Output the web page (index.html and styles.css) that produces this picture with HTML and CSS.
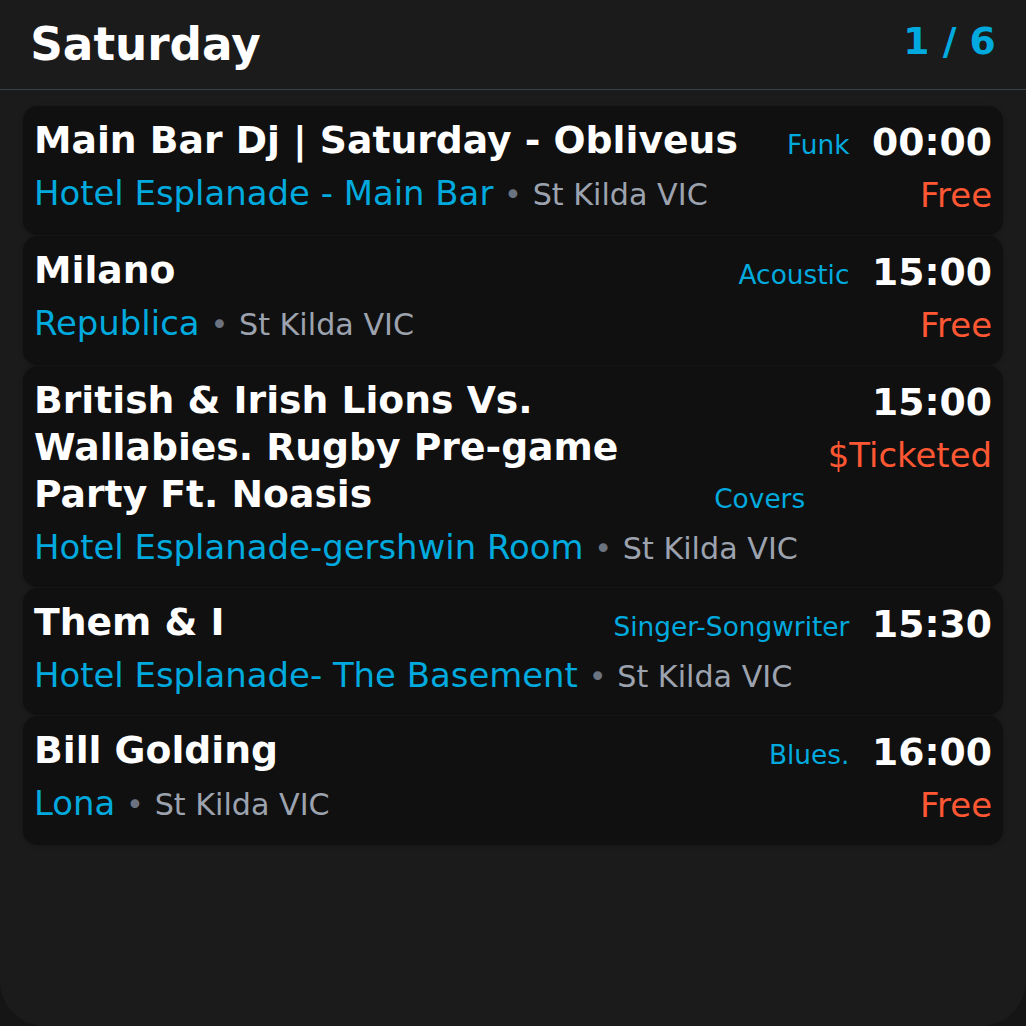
FILE: index.html
```html
<!DOCTYPE html>
<html>
<head>
<meta charset="utf-8">
<link rel="stylesheet" href="styles.css">
</head>
<body>
<div class="widget">
  <header class="head">
    <div class="day">Saturday</div>
    <div class="pager">1 / 6</div>
  </header>
  <div class="list">
    <div class="card">
      <div class="main">
        <div class="top">
          <div class="title">Main Bar Dj | Saturday - Obliveus</div>
          <div class="genre">Funk</div>
        </div>
        <div class="venue"><span class="vname">Hotel Esplanade - Main Bar</span> <span class="dot">•</span> <span class="loc">St Kilda VIC</span></div>
      </div>
      <div class="side">
        <div class="time">00:00</div>
        <div class="price">Free</div>
      </div>
    </div>
    <div class="card">
      <div class="main">
        <div class="top">
          <div class="title">Milano</div>
          <div class="genre">Acoustic</div>
        </div>
        <div class="venue"><span class="vname">Republica</span> <span class="dot">•</span> <span class="loc">St Kilda VIC</span></div>
      </div>
      <div class="side">
        <div class="time">15:00</div>
        <div class="price">Free</div>
      </div>
    </div>
    <div class="card">
      <div class="main">
        <div class="top">
          <div class="title">British &amp; Irish Lions Vs. Wallabies. Rugby Pre-game Party Ft. Noasis</div>
          <div class="genre">Covers</div>
        </div>
        <div class="venue"><span class="vname">Hotel Esplanade-gershwin Room</span> <span class="dot">•</span> <span class="loc">St Kilda VIC</span></div>
      </div>
      <div class="side">
        <div class="time">15:00</div>
        <div class="price">$Ticketed</div>
      </div>
    </div>
    <div class="card">
      <div class="main">
        <div class="top">
          <div class="title">Them &amp; I</div>
          <div class="genre">Singer-Songwriter</div>
        </div>
        <div class="venue"><span class="vname">Hotel Esplanade- The Basement</span> <span class="dot">•</span> <span class="loc">St Kilda VIC</span></div>
      </div>
      <div class="side">
        <div class="time">15:30</div>
      </div>
    </div>
    <div class="card">
      <div class="main">
        <div class="top">
          <div class="title">Bill Golding</div>
          <div class="genre">Blues.</div>
        </div>
        <div class="venue"><span class="vname">Lona</span> <span class="dot">•</span> <span class="loc">St Kilda VIC</span></div>
      </div>
      <div class="side">
        <div class="time">16:00</div>
        <div class="price">Free</div>
      </div>
    </div>
  </div>
</div>
</body>
</html>
```

FILE: styles.css
```css
html, body {
  margin: 0;
  padding: 0;
  background: #151515;
}
body {
  font-family: "DejaVu Sans", "Liberation Sans", sans-serif;
  color: #ffffff;
}
.widget {
  width: 1026px;
  height: 1026px;
  box-sizing: border-box;
  background: #1b1b1b;
  border-radius: 0 0 45px 45px;
  overflow: hidden;
}
.head {
  display: flex;
  justify-content: space-between;
  align-items: flex-start;
  padding: 19px 30.2px 17.4px;
  border-bottom: 1.9px solid #3a404c;
}
.day {
  font-size: 45.3px;
  line-height: 52.8px;
  font-weight: bold;
  color: #ffffff;
}
.pager {
  font-size: 37.7px;
  line-height: 44px;
  font-weight: bold;
  color: #00aade;
}
.list {
  display: flex;
  flex-direction: column;
  gap: 1px;
  padding: 15.8px 22.7px;
}
.card {
  display: flex;
  align-items: flex-start;
  gap: 22.6px;
  padding: 10.8px 11.3px 12.2px;
  background: #101010;
  border-radius: 15px;
  box-shadow: 0 1px 4px rgba(0, 0, 0, 0.25);
}
.main {
  flex: 1;
  min-width: 0;
}
.top {
  display: flex;
  align-items: flex-end;
  gap: 22.6px;
}
.title {
  flex: 1;
  font-size: 37.7px;
  line-height: 47.1px;
  font-weight: bold;
  color: #ffffff;
}
.genre {
  font-size: 26.4px;
  line-height: 36.8px;
  color: #00aade;
  white-space: nowrap;
}
.venue {
  margin-top: 3px;
  font-size: 33.9px;
  line-height: 54px;
  white-space: nowrap;
}
.vname {
  color: #00aade;
}
.dot {
  font-size: 30.2px;
  line-height: 1;
  color: #6b7280;
}
.loc {
  font-size: 30.2px;
  line-height: 1;
  color: #9ca3af;
}
.side {
  display: flex;
  flex-direction: column;
  align-items: flex-end;
}
.time {
  font-size: 37.7px;
  line-height: 50.4px;
  font-weight: bold;
  color: #ffffff;
}
.price {
  margin-top: 1.6px;
  font-size: 33.9px;
  line-height: 54px;
  color: #ff5733;
}
```
